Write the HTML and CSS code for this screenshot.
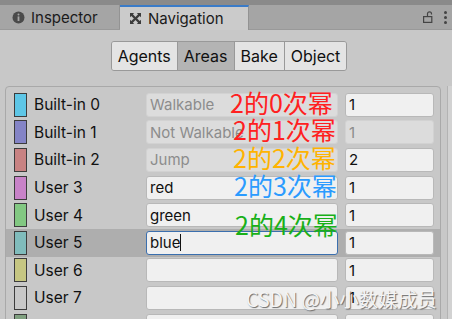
FILE: index.html
```html
<!DOCTYPE html>
<html lang="zh">
<head>
    <meta charset="UTF-8">
    <meta name="viewport" content="width=device-width, initial-scale=1.0">
    <title>Navigation Areas</title>
    <link rel="stylesheet" href="styles.css">
</head>
<body>

<div class="window">
    <div class="chrome"></div>
    <div class="tabbar">
        <div class="tab">
            <svg class="tab-icon" width="13" height="13" viewBox="0 0 13 13">
                <circle cx="6.5" cy="6.5" r="6" fill="#4a4a4a"/>
                <rect x="5.6" y="5.4" width="1.8" height="4.6" fill="#a5a5a5"/>
                <circle cx="6.5" cy="3.6" r="1" fill="#a5a5a5"/>
            </svg>
            Inspector
        </div>
        <div class="tab active">
            <svg class="tab-icon" width="13" height="13" viewBox="0 0 13 13">
                <path d="M1 1h4.2L3.9 2.3 6.5 4.9 9.1 2.3 7.8 1H12v4.2L10.7 3.9 8.1 6.5 10.7 9.1 12 7.8V12H7.8l1.3-1.3L6.5 8.1 3.9 10.7 5.2 12H1V7.8l1.3 1.3L4.9 6.5 2.3 3.9 1 5.2z" fill="#3c3c3c"/>
            </svg>
            Navigation
        </div>
        <div class="tab-tools">
            <svg width="10" height="12" viewBox="0 0 10 12">
                <path d="M4.5 5.5V2.8a2 2 0 0 1 4 0v0.7" fill="none" stroke="#444" stroke-width="1.2"/>
                <rect x="0.6" y="5.6" width="8.2" height="5.8" fill="none" stroke="#444" stroke-width="1.2"/>
            </svg>
            <div class="kebab"><span></span><span></span><span></span></div>
        </div>
    </div>

    <div class="content">
        <div class="toolbar">
            <div class="seg">
                <div class="seg-btn">Agents</div>
                <div class="seg-btn on">Areas</div>
                <div class="seg-btn">Bake</div>
                <div class="seg-btn">Object</div>
            </div>
        </div>

        <div class="areas-wrap">
            <div class="areas">
                <div class="row">
                    <div class="swatch" style="background:#5ec6e6"></div>
                    <div class="label">Built-in 0</div>
                    <div class="field name off">Walkable</div>
                    <div class="field cost">1</div>
                </div>
                <div class="row">
                    <div class="swatch" style="background:#8484c6"></div>
                    <div class="label">Built-in 1</div>
                    <div class="field name off">Not Walkable</div>
                    <div class="field cost off">1</div>
                </div>
                <div class="row">
                    <div class="swatch" style="background:#c88282"></div>
                    <div class="label">Built-in 2</div>
                    <div class="field name off">Jump</div>
                    <div class="field cost">2</div>
                </div>
                <div class="row">
                    <div class="swatch" style="background:#c882c8"></div>
                    <div class="label">User 3</div>
                    <div class="field name">red</div>
                    <div class="field cost">1</div>
                </div>
                <div class="row">
                    <div class="swatch" style="background:#82c882"></div>
                    <div class="label">User 4</div>
                    <div class="field name">green</div>
                    <div class="field cost">1</div>
                </div>
                <div class="row selected">
                    <div class="swatch" style="background:#80bcbc"></div>
                    <div class="label">User 5</div>
                    <div class="field name focus">blue<span class="caret"></span></div>
                    <div class="field cost">1</div>
                </div>
                <div class="row">
                    <div class="swatch" style="background:#c6c682"></div>
                    <div class="label">User 6</div>
                    <div class="field name"></div>
                    <div class="field cost">1</div>
                </div>
                <div class="row">
                    <div class="swatch" style="background:#c8c8c8"></div>
                    <div class="label">User 7</div>
                    <div class="field name"></div>
                    <div class="field cost">1</div>
                </div>
                <div class="row">
                    <div class="swatch" style="background:#80a080"></div>
                    <div class="label">User 8</div>
                    <div class="field name"></div>
                    <div class="field cost">1</div>
                </div>
            </div>
            <div class="scrollbar"></div>
        </div>
    </div>

    <!-- annotations drawn over the screenshot -->
    <div class="note n0">2的0次幂</div>
    <div class="note n1">2的1次幂</div>
    <div class="note n2">2的2次幂</div>
    <div class="note n3">2的3次幂</div>
    <div class="note n4">2的4次幂</div>
    <div class="watermark">CSDN @小小数媒成员</div>
</div>

</body>
</html>
```

FILE: styles.css
```css
body {
    margin: 0;
    padding: 0;
    background-color: #c8c8c8;
    font-family: Inter, "Noto Sans", sans-serif;
    color: #101010;
    overflow: hidden;
}
.window {
    position: relative;
    width: 452px;
    height: 319px;
    overflow: hidden;
}
.chrome {
    height: 5px;
    background-color: #8a8a8a;
}
.tabbar {
    display: flex;
    height: 24px;
    background-color: #a5a5a5;
    border-bottom: 1px solid #999;
}
.tab {
    display: flex;
    align-items: center;
    gap: 6px;
    width: 120px;
    padding-left: 12px;
    box-sizing: border-box;
    font-size: 15px;
    color: #1a1a1a;
    border-right: 1px solid #939393;
}
.tab.active {
    width: 129px;
    padding-left: 9px;
    background-color: #cbcbcb;
    border-top: 2px solid #3a7bc8;
    margin-bottom: -1px;
}
.tab-icon {
    flex: none;
}
.tab-tools {
    flex: 1;
    display: flex;
    align-items: center;
    justify-content: flex-end;
    gap: 11px;
    padding-right: 5px;
}
.kebab {
    display: flex;
    flex-direction: column;
    gap: 2px;
}
.kebab span {
    width: 3px;
    height: 3px;
    border-radius: 50%;
    background-color: #444;
}
.content {
    padding-top: 11px;
}
.toolbar {
    display: flex;
    justify-content: center;
    padding-left: 6px;
}
.seg {
    display: flex;
    height: 28px;
    border: 1px solid #999;
    border-radius: 3px;
    overflow: hidden;
}
.seg-btn {
    display: flex;
    align-items: center;
    padding: 0 6px;
    font-size: 16px;
    background-color: #e4e4e4;
    border-left: 1px solid #999;
}
.seg-btn:first-child {
    border-left: none;
}
.seg-btn.on {
    background-color: #b4b4b4;
}
.areas-wrap {
    display: flex;
    margin-top: 15px;
    padding-left: 5px;
}
.areas {
    width: 437px;
    height: 300px;
    padding-top: 4px;
    border: 1px solid #a9a9a9;
    border-radius: 4px;
    box-sizing: border-box;
}
.scrollbar {
    width: 4px;
    margin-left: 6px;
    height: 300px;
    background-color: #d2d2d2;
    border-left: 1px solid #b3b3b3;
}
.row {
    display: flex;
    align-items: center;
    height: 27.6px;
    padding-left: 8px;
}
.row.selected {
    background-color: #aeaeae;
}
.swatch {
    width: 11px;
    height: 22px;
    border: 1px solid #3c3c3c;
    flex: none;
}
.label {
    width: 112px;
    padding-left: 7px;
    font-size: 15.5px;
    color: #111;
}
.field {
    height: 24px;
    box-sizing: border-box;
    padding-left: 3px;
    display: flex;
    align-items: center;
    font-size: 15px;
    color: #111;
    background-color: #f0f0f0;
    border: 1px solid #b8b8b8;
    border-radius: 3px;
}
.field.name {
    width: 192px;
}
.field.cost {
    width: 89px;
    margin-left: 7px;
}
.field.off {
    background-color: #dcdcdc;
    border-color: #d2d2d2;
    color: #8c8c8c;
}
.field.focus {
    border-color: #3b6fae;
}
.caret {
    display: inline-block;
    width: 1px;
    height: 17px;
    background-color: #111;
}
.note {
    position: absolute;
    font-family: "Noto Sans CJK SC", sans-serif;
    font-size: 25px;
    line-height: 1;
    white-space: nowrap;
}
.n0 { left: 230px; top: 90px; color: #ff2020; }
.n1 { left: 233px; top: 117px; color: #ff2020; }
.n2 { left: 233px; top: 145px; color: #ffb300; }
.n3 { left: 234px; top: 173px; color: #2b9bff; }
.n4 { left: 235px; top: 212px; color: #19b019; }
.watermark {
    position: absolute;
    left: 246px;
    top: 289px;
    font-family: "Noto Sans CJK SC", sans-serif;
    font-size: 19.5px;
    line-height: 1;
    color: #f4f4f4;
    text-shadow: 1px 1px 1px #6a6a6a;
    white-space: nowrap;
}
```
